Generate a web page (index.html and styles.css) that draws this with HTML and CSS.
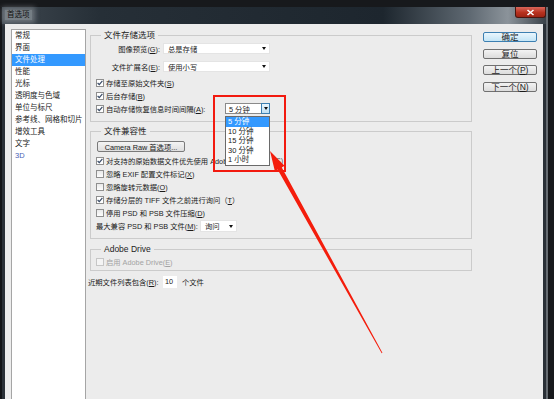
FILE: index.html
```html
<!DOCTYPE html>
<html lang="zh-CN">
<head>
  <meta charset="UTF-8">
  <title>首选项</title>
  <link rel="stylesheet" href="styles.css">
</head>
<body>
  <div class="screen">
    <div class="window">
      <div class="titlebar">
        <span class="title">首选项</span>
        <span class="close">
          <svg width="9" height="7" viewBox="0 0 9 7"><path d="M1.5 1 L7.5 6 M7.5 1 L1.5 6" stroke="#fff" stroke-width="1.6" fill="none"/></svg>
        </span>
      </div>
      <div class="client">
        <ul class="nav">
          <li>常规</li>
          <li>界面</li>
          <li class="active">文件处理</li>
          <li>性能</li>
          <li>光标</li>
          <li>透明度与色域</li>
          <li>单位与标尺</li>
          <li>参考线、网格和切片</li>
          <li>增效工具</li>
          <li>文字</li>
          <li class="blue">3D</li>
        </ul>

        <div class="main">
          <fieldset class="group g1">
            <legend>文件存储选项</legend>
            <div class="field">
              <label>图像预览(<u>G</u>):</label>
              <div class="select">总是存储</div>
            </div>
            <div class="field second">
              <label>文件扩展名(<u>E</u>):</label>
              <div class="select">使用小写</div>
            </div>
            <div class="check first"><span class="box on"></span><span>存储至原始文件夹(<u>S</u>)</span></div>
            <div class="check"><span class="box on"></span><span>后台存储(<u>B</u>)</span></div>
            <div class="check">
              <span class="box on"></span>
              <span class="auto-label">自动存储恢复信息时间间隔(<u>A</u>):</span>
              <div class="select focus"><span>5 分钟</span><span class="drop"></span></div>
            </div>
          </fieldset>

          <fieldset class="group g2">
            <legend>文件兼容性</legend>
            <button class="raw-btn">Camera Raw 首选项...</button>
            <div class="check"><span class="box on"></span><span class="cut">对支持的原始数据文件优先使用 Adob</span><span class="tail">(<u>C</u>)</span></div>
            <div class="check"><span class="box"></span><span>忽略 EXIF 配置文件标记(<u>X</u>)</span></div>
            <div class="check"><span class="box"></span><span>忽略旋转元数据(<u>O</u>)</span></div>
            <div class="check"><span class="box on"></span><span>存储分层的 TIFF 文件之前进行询问（<u>T</u>）</span></div>
            <div class="check"><span class="box"></span><span>停用 PSD 和 PSB 文件压缩(<u>D</u>)</span></div>
            <div class="field compat">
              <span class="compat-label">最大兼容 PSD 和 PSB 文件(<u>M</u>):</span>
              <div class="select small">询问</div>
            </div>
          </fieldset>

          <fieldset class="group g3">
            <legend>Adobe Drive</legend>
            <div class="check disabled"><span class="box"></span><span>启用 Adobe Drive(<u>E</u>)</span></div>
          </fieldset>

          <div class="recent">
            <span class="recent-label">近期文件列表包含(<u>R</u>):</span>
            <span class="num">10</span>
            <span>个文件</span>
          </div>
        </div>

        <div class="actions">
          <button class="default">确定</button>
          <button>复位</button>
          <button>上一个(<u>P</u>)</button>
          <button>下一个(<u>N</u>)</button>
        </div>
      </div>
    </div>

    <ul class="popup">
      <li class="hot">5 分钟</li>
      <li>10 分钟</li>
      <li>15 分钟</li>
      <li>30 分钟</li>
      <li>1 小时</li>
    </ul>

    <div class="callout"></div>

    <svg class="arrow" width="554" height="399" viewBox="0 0 554 399">
      <polygon points="270,151 284.5,165.8 281.8,167.4 382.4,352.8 381.7,353.2 277.6,169.6 274.9,171.2" fill="#f41d0c"/>
    </svg>
  </div>
</body>
</html>
```

FILE: styles.css
```css
* {
  box-sizing: border-box;
}

body {
  margin: 0;
  width: 554px;
  height: 399px;
  overflow: hidden;
  background: #17191c;
  font-family: "Liberation Sans", "Noto Sans CJK SC", sans-serif;
  font-size: 7.3px;
  color: #1b1b1b;
}

u {
  text-decoration: underline;
  text-underline-offset: 1px;
}

.screen {
  position: relative;
  height: 399px;
  padding-top: 7px;
}

.window {
  display: flex;
  flex-direction: column;
  width: 548px;
  height: 392px;
  background: #2a3037;
  border-left: 2px solid #121417;
  border-right: 2px solid #666c72;
}

.titlebar {
  display: flex;
  align-items: flex-start;
  height: 17px;
  background: linear-gradient(90deg, #3e474f 0%, #262f37 18%, #1d262e 70%, #5f6972 86%, #8b939a 93%, #3a4249 100%);
}

.title {
  margin: 3px 0 0 3px;
  padding: 0 2px;
  font-size: 7.5px;
  line-height: 10px;
  color: #111;
  background: rgba(170, 176, 182, 0.55);
  box-shadow: 0 0 5px 3px rgba(170, 176, 182, 0.45);
}

.close {
  display: flex;
  align-items: center;
  justify-content: center;
  margin-left: auto;
  width: 31px;
  height: 11px;
  background: linear-gradient(#d9665a, #b8321f 55%, #9e2414);
  border: 1px solid #4a1610;
  border-top: none;
  border-radius: 0 0 3px 3px;
}

.client {
  display: flex;
  align-items: flex-start;
  height: 375px;
  margin: 0 3px;
  background: #ececec;
  overflow: hidden;
}

/* left category list */
.nav {
  list-style: none;
  margin: 5px 0 0 6px;
  padding: 0;
  width: 75px;
  height: 380px;
  background: #fff;
  border: 1px solid #a5a5a5;
}

.nav li {
  height: 12px;
  line-height: 12px;
  padding-left: 3px;
  font-size: 7.5px;
  white-space: nowrap;
}

.nav li.active {
  background: #3399ff;
  color: #fff;
}

.nav li.blue {
  color: #4a5fb5;
}

/* middle panel */
.main {
  width: 382px;
  margin-left: 4px;
}

.group {
  margin: 0;
  padding: 0 6px 0 5px;
  min-width: 0;
  border: 1px solid #cbcbcb;
}

.group legend {
  margin-left: 5px;
  padding: 0 3px;
  font-size: 8.5px;
  line-height: 11px;
  color: #222;
}

.g1 {
  margin-top: 6px;
  padding-top: 2px;
  padding-bottom: 6px;
}

.g2 {
  margin-top: 4px;
  padding-top: 4px;
  padding-bottom: 5px;
}

.g3 {
  margin-top: 5px;
  padding-top: 1px;
  padding-bottom: 2px;
}

.field {
  display: flex;
  align-items: center;
  height: 11px;
}

.field.second {
  margin-top: 7px;
}

.field label {
  width: 64px;
  margin-right: 3px;
  text-align: right;
  white-space: nowrap;
}

.select {
  display: flex;
  align-items: center;
  width: 107px;
  height: 11px;
  padding-left: 4px;
  background: #fff;
  border: 1px solid #e4e4e4;
  white-space: nowrap;
}

.select::after {
  content: "";
  margin-left: auto;
  margin-right: 3px;
  border-left: 2.5px solid transparent;
  border-right: 2.5px solid transparent;
  border-top: 3px solid #111;
}

.select.small {
  width: 37px;
  height: 12px;
}

.select.focus {
  width: 45px;
  padding-left: 3px;
  border-color: #8a8a8a;
}

.select.focus::after {
  display: none;
}

.drop {
  display: flex;
  align-items: center;
  justify-content: center;
  margin-left: auto;
  width: 9px;
  height: 11px;
  margin-right: -1px;
  background: linear-gradient(#eaf6fd, #bfe0f4);
  border: 1px solid #3c7fb1;
}

.drop::after {
  content: "";
  border-left: 2.5px solid transparent;
  border-right: 2.5px solid transparent;
  border-top: 3px solid #111;
}

.check {
  display: flex;
  align-items: center;
  height: 13px;
  white-space: nowrap;
}

.check.first {
  margin-top: 4px;
}

.box {
  flex: none;
  width: 8px;
  height: 8px;
  margin-right: 2px;
  background: linear-gradient(#e9e9e9, #fdfdfd);
  border: 1px solid #8f8f8f;
}

.box.on {
  background: #fff url("data:image/svg+xml,%3Csvg xmlns='http://www.w3.org/2000/svg' width='6' height='6' viewBox='0 0 6 6'%3E%3Cpath d='M0.6 3 L2.3 4.7 L5.4 0.9' stroke='%23384a66' stroke-width='1.2' fill='none'/%3E%3C/svg%3E") center / 6px 6px no-repeat;
}

.auto-label {
  width: 119px;
}

/* the part of this row hidden under the open list is left out */
.cut {
  width: 167px;
  overflow: hidden;
}

.tail {
  color: #555;
}

.check.disabled {
  height: 12px;
  color: #a3a3a3;
}

.check.disabled .box {
  border-color: #c6c6c6;
  background: #f4f4f4;
}

.raw-btn {
  display: block;
  margin: 0 0 2px 1px;
  padding: 0;
  width: 88px;
  height: 11px;
  font: inherit;
  color: #1b1b1b;
  background: linear-gradient(#f4f4f4, #dedede);
  border: 1px solid #7a7a7a;
  border-radius: 2px;
}

.field.compat {
  height: 14px;
}

.compat-label {
  width: 104px;
  white-space: nowrap;
}

.recent {
  display: flex;
  align-items: center;
  height: 12px;
  margin: 5px 0 0 -2px;
  white-space: nowrap;
}

.recent-label {
  width: 75px;
}

.num {
  width: 14px;
  height: 12px;
  margin-right: 5px;
  padding-left: 2px;
  line-height: 12px;
  background: #fff;
}

/* right buttons */
.actions {
  display: flex;
  flex-direction: column;
  gap: 6.5px;
  width: 54px;
  margin: 8px 0 0 11px;
}

.actions button {
  height: 10px;
  padding: 0;
  font: inherit;
  font-size: 8.5px;
  line-height: 8px;
  color: #1b1b1b;
  background: linear-gradient(#f3f3f3, #dcdcdc);
  border: 1px solid #707070;
  border-radius: 2px;
}

.actions button.default {
  background: linear-gradient(#eaf6fd, #c4e5f6);
  border-color: #3c7fb1;
}

/* open dropdown list */
.popup {
  position: absolute;
  left: 225px;
  top: 116px;
  width: 45px;
  margin: 0;
  padding: 0;
  list-style: none;
  background: #fff;
  border: 1px solid #6a6a6a;
}

.popup li {
  height: 9.5px;
  line-height: 9.5px;
  padding-left: 2px;
  font-size: 7.5px;
}

.popup li.hot {
  background: #3399ff;
  color: #fff;
}

.callout {
  position: absolute;
  left: 213px;
  top: 95px;
  width: 73px;
  height: 77px;
  border: 2px solid #f21a0f;
}

.arrow {
  position: absolute;
  left: 0;
  top: 0;
  pointer-events: none;
}
```
